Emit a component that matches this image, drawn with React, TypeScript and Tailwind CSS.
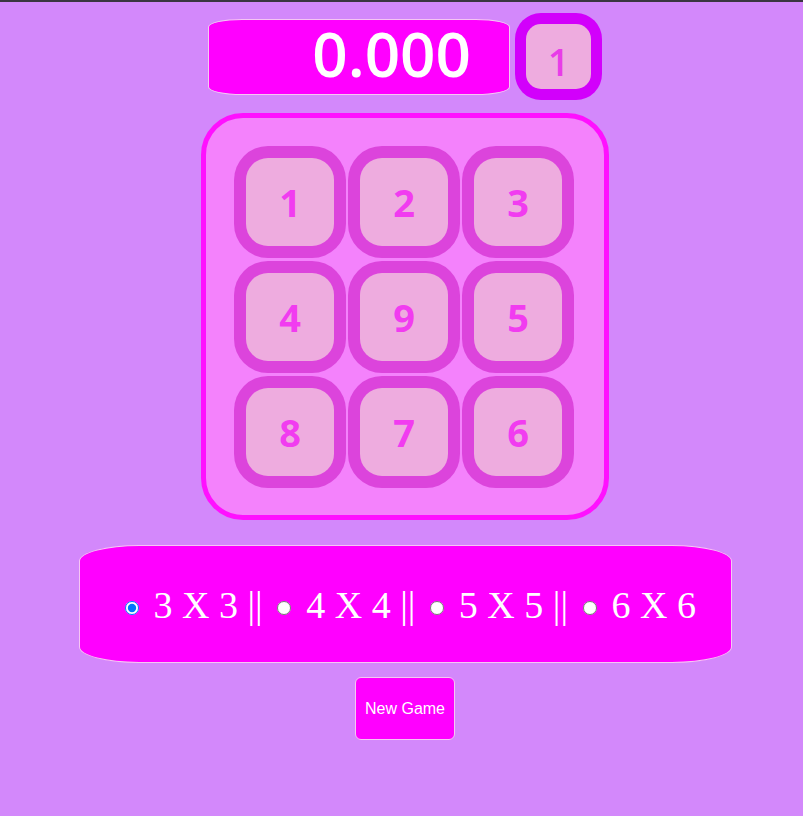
import { useState } from "react";

const TILES = [1, 2, 3, 4, 9, 5, 8, 7, 6];
const SIZES = [3, 4, 5, 6];

function Tile({ n }: { n: number }) {
  return (
    <div className="w-[112px] h-[112px] rounded-[34px] bg-[#dc44dc] p-[12px]">
      <div className="w-full h-full rounded-[22px] bg-[#eeacdf] flex items-center justify-center">
        <span className="text-[38px] font-bold text-[#f13cf0] leading-none [font-family:'Open_Sans',sans-serif]">
          {n}
        </span>
      </div>
    </div>
  );
}

export default function App() {
  const [size, setSize] = useState(3);

  return (
    <div className="min-h-[816px] bg-[#d388fb] [font-family:'Liberation_Sans',Arial,sans-serif]">
      <div className="h-[2px] bg-[#3b3541]" />
      <div className="flex flex-col items-center pl-[7px] pt-[11px]">
        {/* timer + moves */}
        <div className="flex items-center gap-[5px]">
          <div className="w-[302px] h-[76px] bg-[#ff00ff] border border-[#f6c6f4] rounded-[34px/8px] flex items-center justify-end pr-[38px] pb-[8px]">
            <span className="text-white text-[62px] font-semibold leading-none [font-family:'Open_Sans',sans-serif]">
              0.000
            </span>
          </div>
          <div className="w-[87px] h-[87px] rounded-[26px] bg-[#d200fb] p-[11px]">
            <div className="w-full h-full rounded-[15px] bg-[#eeacdf] flex items-center justify-center pt-[8px]">
              <span className="text-[38px] font-semibold text-[#e83ce8] leading-none [font-family:'Open_Sans',sans-serif]">
                1
              </span>
            </div>
          </div>
        </div>

        {/* board */}
        <div className="mt-[13px] w-[408px] h-[407px] rounded-[42px] border-[5px] border-[#ff10ff] bg-[#f482fc] pl-[28px] pt-[28px]">
          <div className="grid grid-cols-[repeat(3,112px)] gap-x-[2px] gap-y-[3px]">
            {TILES.map((n) => (
              <Tile key={n} n={n} />
            ))}
          </div>
        </div>

        {/* size options */}
        <div className="mt-[25px] w-[653px] h-[118px] bg-[#ff00ff] border border-[#f6c6f4] rounded-[60px/16px] flex items-center pl-[40px] pt-[3px] text-white text-[38px] [font-family:'Liberation_Serif','Times_New_Roman',serif]">
          {SIZES.map((s, i) => (
            <label key={s} className="flex items-center">
              <input
                type="radio"
                name="size"
                checked={size === s}
                onChange={() => setSize(s)}
                className="w-[14px] h-[14px] mx-[5px] mt-[4px]"
              />
              <span className="ml-[10px] whitespace-pre">
                {s} X {s}
                {i < SIZES.length - 1 ? " || " : ""}
              </span>
            </label>
          ))}
        </div>

        {/* new game */}
        <button className="mt-[14px] w-[100px] h-[63px] bg-[#ff00ff] border border-[#f6c6f4] rounded-[6px] text-white text-[16px]">
          New Game
        </button>
      </div>
    </div>
  );
}
